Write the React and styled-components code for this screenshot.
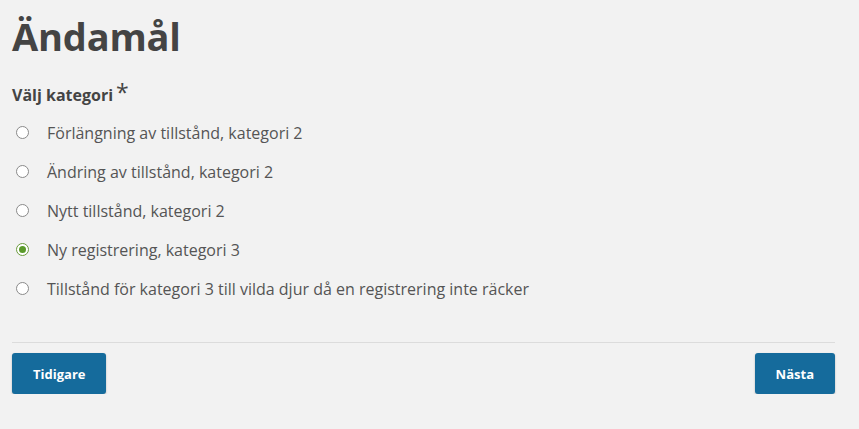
import React, { useState } from 'react'
import styled, { createGlobalStyle } from 'styled-components'

const GlobalStyle = createGlobalStyle`
  html, body {
    margin: 0;
    padding: 0;
    background: #f2f2f2;
    font-family: "Open Sans", "Noto Sans", sans-serif;
  }
`

const options = [
  'Förlängning av tillstånd, kategori 2',
  'Ändring av tillstånd, kategori 2',
  'Nytt tillstånd, kategori 2',
  'Ny registrering, kategori 3',
  'Tillstånd för kategori 3 till vilda djur då en registrering inte räcker',
]

export default function App() {
  const [selected, setSelected] = useState(3)
  return (
    <Page>
      <GlobalStyle />
      <Title>Ändamål</Title>
      <Fieldset>
        <Legend>
          Välj kategori<Required>*</Required>
        </Legend>
        <OptionList>
          {options.map((label, i) => (
            <Option key={label}>
              <Radio
                type="radio"
                name="kategori"
                checked={selected === i}
                onChange={() => setSelected(i)}
              />
              <span>{label}</span>
            </Option>
          ))}
        </OptionList>
      </Fieldset>
      <Divider />
      <Actions>
        <Button>Tidigare</Button>
        <Button>Nästa</Button>
      </Actions>
    </Page>
  )
}

const Page = styled.div`
  box-sizing: border-box;
  width: 859px;
  padding: 8px 24px 0 12px;
`

const Title = styled.h1`
  margin: 0;
  font-size: 38px;
  line-height: 56px;
  font-weight: 700;
  color: #444444;
  letter-spacing: -0.2px;
`

const Fieldset = styled.div`
  margin-top: 19px;
`

const Legend = styled.div`
  font-size: 16px;
  font-weight: 700;
  color: #444444;
  line-height: 24px;
`

const Required = styled.span`
  font-size: 23px;
  font-weight: 400;
  margin-left: 3px;
  line-height: 0;
`

const OptionList = styled.div`
  display: flex;
  flex-direction: column;
  margin-top: 6px;
`

const Option = styled.label`
  display: flex;
  align-items: center;
  height: 39px;
  font-size: 16px;
  color: #555555;
  cursor: pointer;
`

const Radio = styled.input`
  appearance: none;
  box-sizing: border-box;
  width: 13px;
  height: 13px;
  margin: 0 18px 0 4px;
  border-radius: 50%;
  border: 1px solid #8a8a8a;
  background: #ffffff;
  display: grid;
  place-items: center;
  &:checked {
    border-color: #6a9a3c;
  }
  &:checked::after {
    content: '';
    width: 7px;
    height: 7px;
    border-radius: 50%;
    background: #5a9a2a;
  }
`

const Divider = styled.hr`
  margin: 34px 0 10px;
  border: none;
  border-top: 1px solid #dcdcdc;
`

const Actions = styled.div`
  display: flex;
  justify-content: space-between;
`

const Button = styled.button`
  box-sizing: border-box;
  height: 41px;
  padding: 0 21px;
  background: #156b9c;
  color: #ffffff;
  font-family: "Open Sans", "Noto Sans", sans-serif;
  font-size: 13px;
  font-weight: 700;
  border: none;
  border-radius: 3px;
  box-shadow: 0 1px 2px rgba(0, 0, 0, 0.25);
  cursor: pointer;
`
